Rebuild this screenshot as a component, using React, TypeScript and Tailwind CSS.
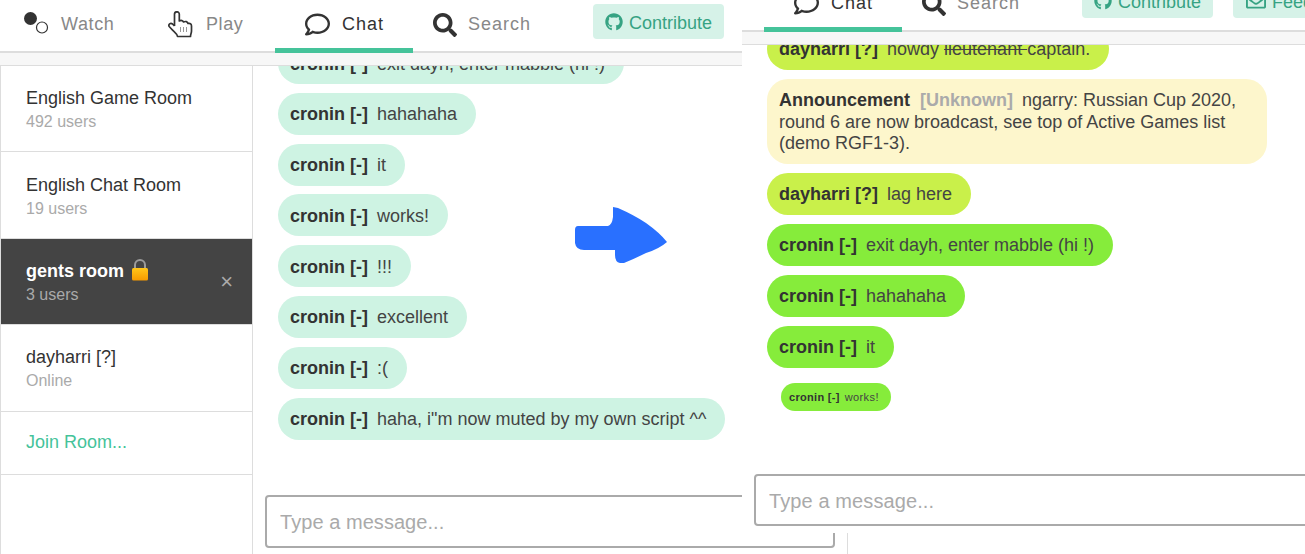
import React from "react";
import { FaGithub, FaRegComment, FaRegEnvelope, FaSearch } from "react-icons/fa";

const WatchIcon = () => (
  <svg width="25" height="25" viewBox="0 0 25 25" className="shrink-0">
    <circle cx="6.5" cy="6.5" r="6.5" fill="#333" />
    <circle cx="18" cy="15.5" r="5.5" fill="none" stroke="#333" strokeWidth="1.2" />
  </svg>
);

const HandIcon = () => (
  <svg width="25" height="27" viewBox="0 0 25 27" className="shrink-0">
    <path
      d="M6.5 15 V3.2 A2.4 2.4 0 0 1 11.3 3.2 V10 C13 9 15 9.5 15.5 11 C17.5 10 19.5 10.5 20 12.5 C22 12 23.5 13 23.5 15 V20 C23.5 22 22.5 23 22.5 25.5 H9.5 C9 22 6 21 3.5 18 L1.2 15.5 C0 13.5 2.5 11.5 4.5 13 L6.5 15"
      fill="none"
      stroke="#333"
      strokeWidth="1.7"
      strokeLinejoin="round"
    />
    <path d="M12.5 16 V21 M15.5 16 V21 M18.5 16 V21" stroke="#999" strokeWidth="1" />
  </svg>
);

const LockIcon = () => (
  <svg width="18" height="22" viewBox="0 0 18 22" className="ml-[7px] inline-block align-[-4px]">
    <defs>
      <linearGradient id="lockBody" x1="0" y1="0" x2="0" y2="1">
        <stop offset="0" stopColor="#ffc61a" />
        <stop offset="1" stopColor="#f59a00" />
      </linearGradient>
    </defs>
    <path d="M4 10V6a5 5 0 0 1 10 0V10" fill="none" stroke="#9b9b9b" strokeWidth="2" />
    <rect x="1" y="9" width="16" height="12.5" rx="1.5" fill="url(#lockBody)" />
  </svg>
);

const Nav = ({ full }: { full: boolean }) => (
  <div className="flex h-[53px] shrink-0 items-stretch border-b-2 border-[#ddd] bg-white">
    {full ? (
      <>
        <div className="flex w-[138px] items-center gap-[12px] pb-[2px] pl-[24px] text-[18px] tracking-[0.6px] text-[#888]">
          <WatchIcon />
          Watch
        </div>
        <div className="flex w-[137px] items-center gap-[13px] pb-[2px] pl-[30px] text-[18px] tracking-[0.6px] text-[#888]">
          <HandIcon />
          Play
        </div>
      </>
    ) : (
      <div className="w-[22px] shrink-0" />
    )}
    <div className="-mb-[2px] flex w-[138px] shrink-0 items-center gap-[12px] border-b-[5px] border-[#45c39a] pl-[30px] text-[18px] tracking-[1px] text-[#333]">
      <FaRegComment size={25} className="shrink-0 text-[#333]" />
      Chat
    </div>
    <div className="flex w-[180px] shrink-0 items-center gap-[11px] pb-[2px] pl-[20px] text-[18px] tracking-[1px] text-[#888]">
      <FaSearch size={24} className="shrink-0 text-[#333]" />
      Search
    </div>
    <div className="mt-[4px] flex h-[35px] w-[131px] shrink-0 items-center justify-center gap-[6px] rounded bg-[#d6f2e8] pt-[4px] text-[18px] text-[#36a383]">
      <FaGithub size={18} className="-mt-[4px]" />
      Contribute
    </div>
    {!full && (
      <div className="ml-[20px] mt-[4px] flex h-[35px] w-[131px] shrink-0 items-center justify-center gap-[6px] rounded bg-[#d6f2e8] pt-[4px] text-[18px] text-[#36a383]">
        <FaRegEnvelope size={20} className="-mt-[4px]" />
        Feedback
      </div>
    )}
  </div>
);

const rooms = [
  { title: "English Game Room", sub: "492 users" },
  { title: "English Chat Room", sub: "19 users" },
];

const Room = ({ title, sub }: { title: string; sub: string }) => (
  <div className="flex h-[86.4px] flex-col justify-center border-b border-[#ddd] pl-[25px] pt-[3px]">
    <div className="text-[18px] leading-[24px] text-[#333]">{title}</div>
    <div className="text-[16px] leading-[24px] text-[#aaa]">{sub}</div>
  </div>
);

const Sidebar = () => (
  <div className="w-[253px] shrink-0 border-x border-[#ddd]">
    {rooms.map((r) => (
      <Room key={r.title} {...r} />
    ))}
    <div className="relative flex h-[86.4px] flex-col justify-center border-b border-[#ddd] bg-[#444] pl-[25px] pt-[3px]">
      <div className="text-[18px] font-bold leading-[24px] text-white">
        gents room
        <LockIcon />
      </div>
      <div className="text-[16px] leading-[24px] text-[#aaa]">3 users</div>
      <span className="absolute right-[19px] top-[31px] text-[22px] font-light leading-[24px] text-[#aaa]">×</span>
    </div>
    <Room title="dayharri [?]" sub="Online" />
    <div className="flex h-[63px] items-center border-b border-[#ddd] pl-[25px] text-[18px] text-[#45c39a]">
      Join Room...
    </div>
  </div>
);

const Bubble = ({ name, bg, children, nudge }: { name: string; bg: string; children: React.ReactNode; nudge?: boolean }) => (
  <div className={`flex h-[42px] w-fit shrink-0 items-center whitespace-nowrap rounded-[21px] pl-3 pr-[19px] text-[18px] text-[#444] ${bg} ${nudge ? "pt-[2px]" : ""}`}>
    <b className="mr-[9px] text-[#333]">{name}</b>
    <span>{children}</span>
  </div>
);

const leftMessages = ["hahahaha", "it", "works!", "!!!", "excellent", ":(", 'haha, i"m now muted by my own script ^^'];

const LeftWindow = () => (
  <div className="flex h-[554px] w-[848px] flex-col bg-white">
    <Nav full />
    <div className="h-[13px] shrink-0 border-b border-[#ddd] bg-[#f7f7f7]" />
    <div className="flex min-h-0 flex-1">
      <Sidebar />
      <div className="flex min-w-0 flex-1 flex-col border-r border-[#ddd]">
        <div className="flex min-h-0 flex-1 flex-col gap-[8.8px] overflow-hidden pl-[25px]">
          <div className="-mt-[24px]">
            <Bubble nudge name="cronin [-]" bg="bg-[#cef3e3]">exit dayh, enter mabble (hi !)</Bubble>
          </div>
          {leftMessages.map((m) => (
            <Bubble nudge key={m} name="cronin [-]" bg="bg-[#cef3e3]">{m}</Bubble>
          ))}
        </div>
        <input
          placeholder="Type a message..."
          className="mx-3 mb-[6px] h-[53px] shrink-0 rounded border-2 border-[#aaa] px-[13px] pt-[2px] text-[20px] tracking-[0.05px] text-[#333] placeholder:text-[#aaa]"
        />
      </div>
    </div>
  </div>
);

const RightWindow = () => (
  <div className="flex h-[533px] w-[563px] flex-col overflow-hidden bg-white">
    <div className="-mt-[21px] w-[700px]">
      <Nav full={false} />
    </div>
    <div className="h-[13px] shrink-0 border-b border-[#ddd] bg-[#f7f7f7]" />
    <div className="flex min-h-0 flex-1 flex-col gap-[9px] overflow-hidden pl-[25px]">
      <div className="-mt-[17px]">
        <Bubble name="dayharri [?]" bg="bg-[#c9f04a]">
          howdy <s>lieutenant </s>captain.
        </Bubble>
      </div>
      <div className="w-[500px] shrink-0 rounded-[21px] bg-[#fdf6cc] px-3 pb-[9px] pt-[11px] text-[18px] leading-[21.7px] text-[#444]">
        <b className="mr-[10px] text-[#333]">Announcement</b>
        <b className="mr-[9px] text-[#aaa]">[Unknown]</b>
        ngarry: Russian Cup 2020, round 6 are now broadcast, see top of Active Games list (demo RGF1-3).
      </div>
      <Bubble name="dayharri [?]" bg="bg-[#c9f04a]">lag here</Bubble>
      <Bubble name="cronin [-]" bg="bg-[#86ec3b]">exit dayh, enter mabble (hi !)</Bubble>
      <Bubble name="cronin [-]" bg="bg-[#86ec3b]">hahahaha</Bubble>
      <Bubble name="cronin [-]" bg="bg-[#86ec3b]">it</Bubble>
      <div className="ml-[14px] mt-[6px] flex h-[28px] w-fit items-center whitespace-nowrap rounded-[14px] bg-[#86ec3b] pl-2 pr-3 text-[11px] text-[#444]">
        <b className="mr-[5px] tracking-[0.3px] text-[#333]">cronin [-]</b>
        <span className="tracking-[0.4px]">works!</span>
      </div>
    </div>
    <input
      placeholder="Type a message..."
      className="mb-[7px] ml-3 h-[52px] w-[600px] shrink-0 rounded border-2 border-[#aaa] px-[13px] pt-[2px] text-[20px] tracking-[0.1px] text-[#333] placeholder:text-[#aaa]"
    />
  </div>
);

export default function App() {
  return (
    <div className="relative h-[554px] w-[1305px] overflow-hidden bg-white font-['Liberation_Sans',Arial,sans-serif]">
      <LeftWindow />
      <div className="absolute left-[742px] top-0">
        <RightWindow />
      </div>
      <svg width="96" height="60" viewBox="0 0 96 60" className="absolute left-[574px] top-[205px]">
        <path
          d="M4 21 H34 Q38 20 39 12 L39 2 L44 3 Q60 10 72 18 Q86 28 93 37 Q85 44 72 48 Q60 54 50 58 L46 58 Q41 57 41 50 L41 45 L10 45 Q2 45 1 38 L1 25 Q1 21 4 21 Z"
          fill="#2970ff"
        />
      </svg>
    </div>
  );
}
